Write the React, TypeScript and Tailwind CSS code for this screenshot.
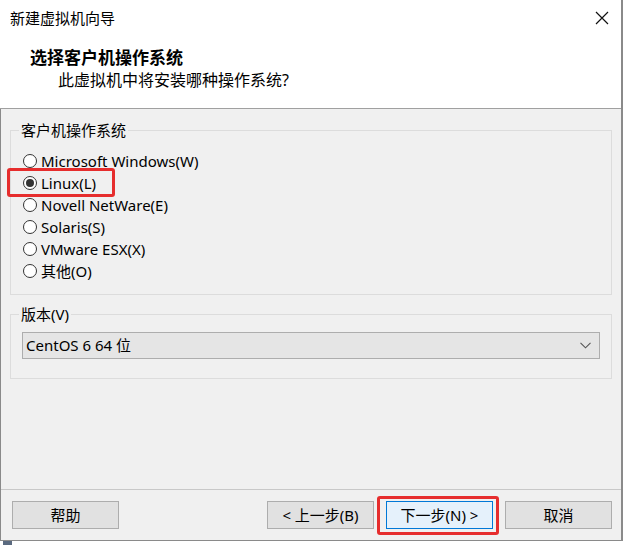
import React from "react";

const font = { fontFamily: '"Noto Sans", "Noto Sans CJK SC", sans-serif' };

function Radio({ label, checked }: { label: string; checked?: boolean }) {
  return (
    <div className="relative flex h-[22px] items-center">
      {checked && (
        <div className="absolute left-[-16px] top-[-4px] h-[29px] w-[108px] rounded-[3px] border-[3px] border-[#e62d2d]" />
      )}
      <div className="flex h-[14px] w-[14px] items-center justify-center rounded-full border border-[#333333] bg-white">
        {checked && <div className="h-[8px] w-[8px] rounded-full bg-[#333333]" />}
      </div>
      <span className="ml-[4px] text-[15px] leading-none text-black">{label}</span>
    </div>
  );
}

function Btn({ label, primary }: { label: string; primary?: boolean }) {
  return (
    <button
      className={
        "flex h-[28px] w-[107px] items-center justify-center border text-[15px] text-black " +
        (primary ? "border-[#0078d7] bg-[#e5f1fb]" : "border-[#adadad] bg-[#e1e1e1]")
      }
    >
      {label}
    </button>
  );
}

export default function App() {
  return (
    <div className="relative h-[545px] w-[625px] overflow-hidden bg-white" style={font}>
      <div className="flex h-[541px] w-[623px] flex-col border-r-2 border-b border-[#8a8a8a]">
        {/* title bar */}
        <div className="flex h-[36px] items-center justify-between bg-white pl-[10px] pr-[12px]">
          <span className="text-[15px] text-black">新建虚拟机向导</span>
          <svg width="14" height="14" viewBox="0 0 14 14" className="mt-[-1px]">
            <path d="M1 1 L13 13 M13 1 L1 13" stroke="#111" strokeWidth="1.2" />
          </svg>
        </div>
        {/* header */}
        <div className="flex h-[73px] flex-col border-b border-[#a0a0a0] bg-white">
          <div className="ml-[30px] mt-[10px] text-[17px] font-bold leading-[23px] text-black">选择客户机操作系统</div>
          <div className="ml-[58px] mt-[0px] text-[16px] leading-[22px] text-black">此虚拟机中将安装哪种操作系统?</div>
        </div>
        {/* body */}
        <div className="flex flex-1 flex-col border-l border-[#8a8a8a] bg-[#f0f0f0]">
          <fieldset className="mx-[9px] mt-[11px] h-[175px] border border-[#dcdcdc] pt-[10px]">
            <legend className="ml-[8px] px-[2px] text-[15px] leading-[20px] text-black">客户机操作系统</legend>
            <div className="pl-[12px]">
              <Radio label="Microsoft Windows(W)" />
              <Radio label="Linux(L)" checked />
              <Radio label="Novell NetWare(E)" />
              <Radio label="Solaris(S)" />
              <Radio label="VMware ESX(X)" />
              <Radio label="其他(O)" />
            </div>
          </fieldset>
          <fieldset className="mx-[9px] mt-[9px] h-[75px] border border-[#dcdcdc] pt-[8px]">
            <legend className="ml-[8px] px-[2px] text-[15px] leading-[20px] text-black">版本(V)</legend>
            <div className="px-[11px]">
              <div className="flex h-[27px] items-center justify-between border border-[#adadad] bg-[#e5e5e5] pl-[3px] pr-[8px]">
                <span className="text-[15px] text-black">CentOS 6 64 位</span>
                <svg width="11" height="7" viewBox="0 0 11 7">
                  <path d="M0.5 0.8 L5.5 5.8 L10.5 0.8" stroke="#555" strokeWidth="1.1" fill="none" />
                </svg>
              </div>
            </div>
          </fieldset>
          <div className="flex-1" />
          {/* footer */}
          <div className="flex h-[51px] items-start border-t border-[#c8c8c8] pl-[11px] pt-[11px]">
            <Btn label="帮助" />
            <div className="flex-1" />
            <Btn label="< 上一步(B)" />
            <div className="ml-[3px] mt-[-5px] rounded-[3px] border-[3px] border-[#e62d2d] pb-[3px] pl-[6px] pr-[3px] pt-[2px]">
              <Btn label="下一步(N) >" primary />
            </div>
            <div className="ml-[6px] mr-[9px]">
              <Btn label="取消" />
            </div>
          </div>
        </div>
      </div>
      <div className="absolute bottom-0 left-[3px] h-[4px] w-[9px] bg-[#5a6a80]" />
    </div>
  );
}
